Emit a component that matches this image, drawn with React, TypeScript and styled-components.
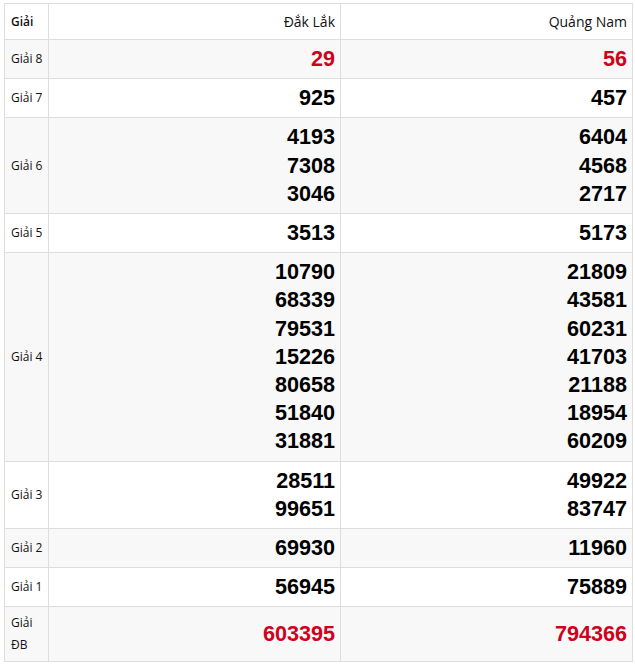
import styled, { createGlobalStyle } from "styled-components";

const GlobalStyle = createGlobalStyle`
  body {
    margin: 0;
    padding: 3px 3px 0 4px;
    background: #ffffff;
    font-family: "Open Sans", "Noto Sans", Arial, sans-serif;
    color: #000;
  }
`;

type Row = {
  label: string;
  a: string[];
  b: string[];
  red?: boolean;
};

const rows: Row[] = [
  { label: "Giải 8", a: ["29"], b: ["56"], red: true },
  { label: "Giải 7", a: ["925"], b: ["457"] },
  { label: "Giải 6", a: ["4193", "7308", "3046"], b: ["6404", "4568", "2717"] },
  { label: "Giải 5", a: ["3513"], b: ["5173"] },
  {
    label: "Giải 4",
    a: ["10790", "68339", "79531", "15226", "80658", "51840", "31881"],
    b: ["21809", "43581", "60231", "41703", "21188", "18954", "60209"],
  },
  { label: "Giải 3", a: ["28511", "99651"], b: ["49922", "83747"] },
  { label: "Giải 2", a: ["69930"], b: ["11960"] },
  { label: "Giải 1", a: ["56945"], b: ["75889"] },
  { label: "Giải ĐB", a: ["603395"], b: ["794366"], red: true },
];

const Table = styled.table`
  width: 629px;
  border-collapse: collapse;
  table-layout: fixed;
  border: 1px solid #dddddd;
`;

const HeadCell = styled.th<{ $left?: boolean }>`
  border: 1px solid #dddddd;
  padding: 5px 5px 5px 6px;
  height: 25px;
  text-align: ${(p) => (p.$left ? "left" : "right")};
  font-size: ${(p) => (p.$left ? "12px" : "14px")};
  font-weight: ${(p) => (p.$left ? 600 : 400)};
  color: #111;
`;

const BodyRow = styled.tr<{ $alt: boolean }>`
  background: ${(p) => (p.$alt ? "#f8f8f8" : "#ffffff")};
`;

const LabelCell = styled.td`
  border: 1px solid #dddddd;
  padding: 5px 4px 5px 6px;
  font-size: 12px;
  line-height: 22px;
  color: #111;
  vertical-align: middle;
`;

const NumCell = styled.td<{ $red?: boolean }>`
  border: 1px solid #dddddd;
  padding: 5px 5px 5px 6px;
  text-align: right;
  vertical-align: middle;
  font-family: "Liberation Sans", Arial, sans-serif;
  font-weight: 700;
  font-size: 21.6px;
  line-height: 28.2px;
  color: ${(p) => (p.$red ? "#d0021b" : "#000000")};
`;

const Num = styled.div``;

export default function App() {
  return (
    <>
      <GlobalStyle />
      <Table>
        <colgroup>
          <col style={{ width: 44 }} />
          <col />
          <col />
        </colgroup>
        <thead>
          <tr>
            <HeadCell $left>Giải</HeadCell>
            <HeadCell>Đắk Lắk</HeadCell>
            <HeadCell>Quảng Nam</HeadCell>
          </tr>
        </thead>
        <tbody>
          {rows.map((r, i) => (
            <BodyRow key={r.label} $alt={i % 2 === 0}>
              <LabelCell>{r.label}</LabelCell>
              <NumCell $red={r.red}>
                {r.a.map((n) => (
                  <Num key={n}>{n}</Num>
                ))}
              </NumCell>
              <NumCell $red={r.red}>
                {r.b.map((n) => (
                  <Num key={n}>{n}</Num>
                ))}
              </NumCell>
            </BodyRow>
          ))}
        </tbody>
      </Table>
    </>
  );
}
